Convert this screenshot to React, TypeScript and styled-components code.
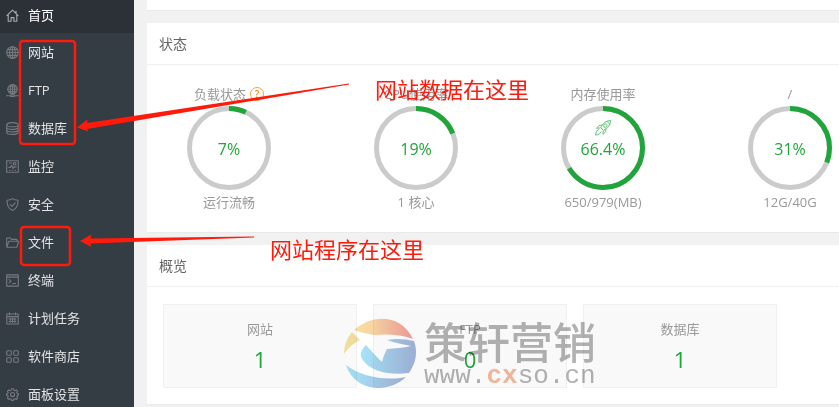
import React from 'react';
import styled, { createGlobalStyle } from 'styled-components';

const GlobalStyle = createGlobalStyle`
  * { box-sizing: border-box; }
  body {
    margin: 0;
    background: #f1f1f1;
    color: #666;
    font: 400 13px/20px "Open Sans", "Noto Sans CJK SC", sans-serif;
  }
`;

const Page = styled.div`
  position: relative;
  display: flex;
  height: 100vh;
  overflow: hidden;
`;

const Sidebar = styled.nav`
  flex: 0 0 134px;
  background: #353d44;
`;

const NavLink = styled.a<{ $active?: boolean }>`
  display: flex;
  align-items: center;
  gap: 9px;
  height: ${(p) => (p.$active ? 33 : 38)}px;
  padding: 0 6px ${(p) => (p.$active ? 3 : 0)}px;
  background: ${(p) => (p.$active ? '#2c3138' : 'transparent')};
  color: ${(p) => (p.$active ? '#fff' : '#e2e4e6')};
  text-decoration: none;
`;

const NavIcon = styled.svg<{ $bright?: boolean }>`
  flex: none;
  width: 13px;
  height: 13px;
  fill: none;
  stroke: ${(p) => (p.$bright ? '#a9adb1' : '#757a7f')};
  stroke-width: 1.1;
  stroke-linejoin: round;
`;

const Main = styled.main`
  flex: 1;
  min-width: 0;
  display: flex;
  flex-direction: column;
  gap: 12px;
  padding-left: 13px;
`;

const Card = styled.section`
  flex: none;
  background: #fff;
  border-bottom: 1px solid #eaeaea;
  overflow: hidden;
`;

const TopCard = styled(Card)`
  height: 11px;
`;

const CardTitle = styled.h2`
  margin: 0;
  height: 42px;
  padding: 0 12px;
  border-bottom: 1px solid #f0f0f0;
  color: #666;
  font-size: 14px;
  font-weight: 400;
  line-height: 42px;
`;

const GaugeRow = styled.div`
  display: grid;
  grid-template-columns: repeat(4, 164px);
  gap: 23px;
  padding: 19px 0 18px;
`;

const Gauge = styled.div`
  display: flex;
  flex-direction: column;
  align-items: center;
  gap: 2px;
  color: #999;
`;

const GaugeLabel = styled.div`
  display: flex;
  align-items: center;
  gap: 4px;
`;

const Help = styled.button`
  width: 14px;
  height: 14px;
  padding: 0;
  border: 1px solid #f7a041;
  border-radius: 50%;
  background: none;
  color: #f0902c;
  font: 600 10px/12px "Open Sans", sans-serif;
`;

const Dial = styled.div`
  display: grid;
  place-items: center;
  width: 84px;
  height: 84px;
  color: #20a53a;
  font-size: 16px;

  > * { grid-area: 1 / 1; }
`;

const DialValue = styled.span`
  padding-top: 2px;
`;

const Ring = styled.svg`
  width: 84px;
  height: 84px;
  fill: none;
  stroke-width: 5;
`;

const RocketIcon = styled.svg`
  align-self: start;
  width: 18px;
  height: 18px;
  margin-top: 13px;
  fill: none;
  stroke: #63c176;
  stroke-width: 1;
`;

const Caption = styled.div`
  padding-bottom: 2px;
`;

const TileRow = styled.div`
  display: grid;
  grid-template-columns: repeat(3, 194px);
  gap: 16px;
  padding: 17px 16px 16px;
`;

const Tile = styled.div`
  height: 84px;
  padding-top: 14px;
  border: 1px solid #f0f0f0;
  background: #f9f9f9;
  color: #999;
  text-align: center;
`;

const TileLink = styled.a`
  display: block;
  margin-top: 4px;
  color: #20a53a;
  font-size: 22px;
  line-height: 32px;
  text-decoration: none;
`;

const Marks = styled.svg`
  position: absolute;
  top: 0;
  left: 0;
  width: 360px;
  height: 280px;
  pointer-events: none;
`;

const Note = styled.div<{ $x: number; $y: number }>`
  position: absolute;
  left: ${(p) => p.$x}px;
  top: ${(p) => p.$y}px;
  color: #ff1a0c;
  font-size: 22px;
  line-height: 30px;
  white-space: nowrap;
`;

const Watermark = styled.div`
  position: absolute;
  left: 344px;
  top: 318px;
  display: flex;
  gap: 6px;
  mix-blend-mode: multiply;
  pointer-events: none;
`;

const WatermarkLogo = styled.svg`
  width: 74px;
  height: 71px;
`;

const WatermarkText = styled.div`
  color: #b2b2b2;
  font: 500 43px/44px "Noto Sans CJK SC", sans-serif;
  white-space: nowrap;
`;

const WatermarkUrl = styled.div`
  padding-top: 4px;
  font: 400 26px/20px "Liberation Mono", monospace;

  b { color: #f5baa0; }
`;

const navItems = [
  { label: '首页', icon: <path d="M.6 6.9 6.5 1.2l5.9 5.7M2.2 5.6v6.6h2.9V8.6h2.8v3.6h2.9V5.6M10 4.4V1.8" /> },
  {
    label: '网站',
    icon: (
      <>
        <circle cx="6.5" cy="6.5" r="5.8" />
        <ellipse cx="6.5" cy="6.5" rx="2.8" ry="5.8" />
        <path d="M6.5.7v11.6M.7 6.5h11.6M1.6 3.6h9.8M1.6 9.4h9.8" />
      </>
    ),
  },
  {
    label: 'FTP',
    icon: (
      <>
        <circle cx="6.5" cy="5.2" r="4.7" />
        <ellipse cx="6.5" cy="5.2" rx="2.2" ry="4.7" />
        <path d="M6.5.5v11M1.8 5.2h9.4M2.6 2.8h7.8M2.6 7.6h7.8M0 11.8h4.6M8.4 11.8H13M4.6 11h3.8v1.5H4.6z" />
      </>
    ),
  },
  {
    label: '数据库',
    icon: (
      <>
        <ellipse cx="6.5" cy="2.7" rx="5.8" ry="2.1" />
        <path d="M.7 2.7v7.6c0 2.8 11.6 2.8 11.6 0V2.7M.7 5.3c0 2.8 11.6 2.8 11.6 0M.7 7.8c0 2.8 11.6 2.8 11.6 0" />
      </>
    ),
  },
  { label: '监控', icon: <path d="M.7.7h11.6v11.6H.7zM3 3h3M7.4 2.8h2.4v2H7.4zM2.4 7.4h2l1.2-2 1.5 3 1.1-1.5h2.4M3 10.3h1.4M5.8 10.3h1.4M8.6 10.3H10" /> },
  { label: '安全', icon: <path d="M6.5.6C8 1.7 10 2.2 12 2.2c.2 5-1.3 8.5-5.5 10.3C2.3 10.7.8 7.2 1 2.2 3 2.2 5 1.7 6.5.6zM3.8 6.3l2.1 2.1 3.6-3.8" /> },
  { label: '文件', icon: <path d="M.7 10.8V2h3.7l1.2 1.4h5.2v1.8M.8 11.2l2-6h9.9l-1.8 6z" /> },
  { label: '终端', icon: <path d="M.7.9h11.6v11.2H.7zM.7 3.1h11.6M2.8 5.1l2.2 2-2.2 2M6.2 9.5h3.8" /> },
  { label: '计划任务', icon: <path d="M.8 2h11.4v10H.8zM.8 4.6h11.4M3.5.6v2.7M9.5.6v2.7M2.7 7h7.6M2.7 9.5h7.6M4.2 5.8v5M6.5 5.8v5M8.8 5.8v5" /> },
  {
    label: '软件商店',
    icon: (
      <>
        <rect x=".7" y=".7" width="4.6" height="4.6" rx="1" />
        <rect x="7.7" y=".7" width="4.6" height="4.6" rx="1" />
        <rect x=".7" y="7.7" width="4.6" height="4.6" rx="1" />
        <rect x="7.7" y="7.7" width="4.6" height="4.6" rx="1" />
      </>
    ),
  },
  {
    label: '面板设置',
    icon: (
      <>
        <circle cx="6.5" cy="6.5" r="2" />
        <path d="m5.5.8-.4 1.5-1 .4-1.4-.8-1.3 1.4.8 1.3-.4 1-1.2.3v1.5l1.2.4.4 1-.8 1.4 1.3 1.3 1.4-.8 1 .4.4 1.3h2l.4-1.3 1-.4 1.4.8 1.3-1.3-.8-1.4.4-1 1.2-.4V5.9l-1.2-.3-.4-1 .8-1.3-1.3-1.4-1.4.8-1-.4-.4-1.5z" />
      </>
    ),
  },
];

const gauges = [
  { label: '负载状态', value: 7, caption: '运行流畅', help: true },
  { label: 'CPU使用率', value: 19, caption: '1 核心' },
  { label: '内存使用率', value: 66.4, caption: '650/979(MB)', rocket: true },
  { label: '/', value: 31, caption: '12G/40G' },
];

const tiles = [
  { label: '网站', count: 1 },
  { label: 'FTP', count: 0 },
  { label: '数据库', count: 1 },
];

export default function App() {
  return (
    <Page>
      <GlobalStyle />
      <Sidebar>
        {navItems.map((item, i) => (
          <NavLink key={item.label} href="#" $active={i === 0}>
            <NavIcon viewBox="0 0 13 13" $bright={i === 0} aria-hidden>{item.icon}</NavIcon>
            {item.label}
          </NavLink>
        ))}
      </Sidebar>
      <Main>
        <TopCard />
        <Card>
          <CardTitle>状态</CardTitle>
          <GaugeRow>
            {gauges.map((g) => (
              <Gauge key={g.label}>
                <GaugeLabel>
                  {g.label}
                  {g.help && <Help type="button">?</Help>}
                </GaugeLabel>
                <Dial>
                  <Ring viewBox="0 0 84 84" aria-hidden>
                    <circle cx="42" cy="42" r="39.5" stroke="#cbcbcb" />
                    <circle
                      cx="42"
                      cy="42"
                      r="39.5"
                      stroke="#20a53a"
                      pathLength={100}
                      strokeDasharray={`${g.value} 100`}
                      transform="rotate(-90 42 42)"
                    />
                  </Ring>
                  {g.rocket && (
                    <RocketIcon viewBox="0 0 18 18" aria-hidden>
                      <path d="M16.5 1.5c-4.5.2-7.5 2.5-9.8 7.2l2.8 2.6c4.6-2.2 7-5.2 7-9.8zM8.3 6 5 6.5 2.6 9.3l3.8-.4M12 9.5l-.4 3.3-2.7 2.6.4-4M5 10.5c-2 .3-3 2.5-3.4 5.6 3-.4 5-1.4 5.5-3.5M13 2.3l2.8 2.6" />
                      <circle cx="11.3" cy="6.6" r="1.7" />
                    </RocketIcon>
                  )}
                  <DialValue>{g.value}%</DialValue>
                </Dial>
                <Caption>{g.caption}</Caption>
              </Gauge>
            ))}
          </GaugeRow>
        </Card>
        <Card>
          <CardTitle>概览</CardTitle>
          <TileRow>
            {tiles.map((t) => (
              <Tile key={t.label}>
                {t.label}
                <TileLink href="#">{t.count}</TileLink>
              </Tile>
            ))}
          </TileRow>
        </Card>
      </Main>

      <Watermark>
        <WatermarkLogo viewBox="0 0 74 71" aria-hidden>
          <defs>
            <linearGradient id="warm">
              <stop offset="0" stopColor="#f6e6a0" />
              <stop offset=".45" stopColor="#f8d3a2" />
              <stop offset="1" stopColor="#f29a9a" />
            </linearGradient>
            <linearGradient id="cool">
              <stop offset="0" stopColor="#a6e4f8" />
              <stop offset="1" stopColor="#a0b2d8" />
            </linearGradient>
          </defs>
          <path fill="url(#warm)" d="M10 12C26-3 56-6 69 21 56 16 42 16 30 17 23 16 16 14 10 12zM8 14l8 8C10 25 5 29 0 36 0 28 3 20 8 14z" />
          <path fill="url(#cool)" d="M22 27c5 6 10 11 16 17 1-5 3-9 5-13 8-1 16-1 24-3-8-2-16-3-24-6 9-2 18-1 27 1 4 11 2 22-5 32-17 2-38 0-47-14-3-5 0-10 4-14z" />
          <path fill="url(#cool)" d="M2 47c16 12 39 16 60 12C44 76 11 74 2 47z" />
        </WatermarkLogo>
        <WatermarkText>
          策轩营销
          <WatermarkUrl>www.<b>cx</b>so.cn</WatermarkUrl>
        </WatermarkText>
      </Watermark>

      <Marks viewBox="0 0 360 280" aria-hidden>
        <g fill="none" stroke="#ff1a0c" strokeWidth="2.5">
          <rect x="20" y="41" width="55" height="103" rx="3" />
          <rect x="21" y="227" width="49" height="38" rx="3" />
        </g>
        <path fill="#ff1a0c" d="M77 127.500 87.500 119.500 87 123 349 83.500v1L87 129l1.500 2.500z" />
        <path fill="#ff1a0c" d="M80 241 91.500 234.500 90.500 238.500 254 236.500v1L90.500 243.500l1 3.500z" />
      </Marks>
      <Note $x={375} $y={74}>网站数据在这里</Note>
      <Note $x={270} $y={234}>网站程序在这里</Note>
    </Page>
  );
}
